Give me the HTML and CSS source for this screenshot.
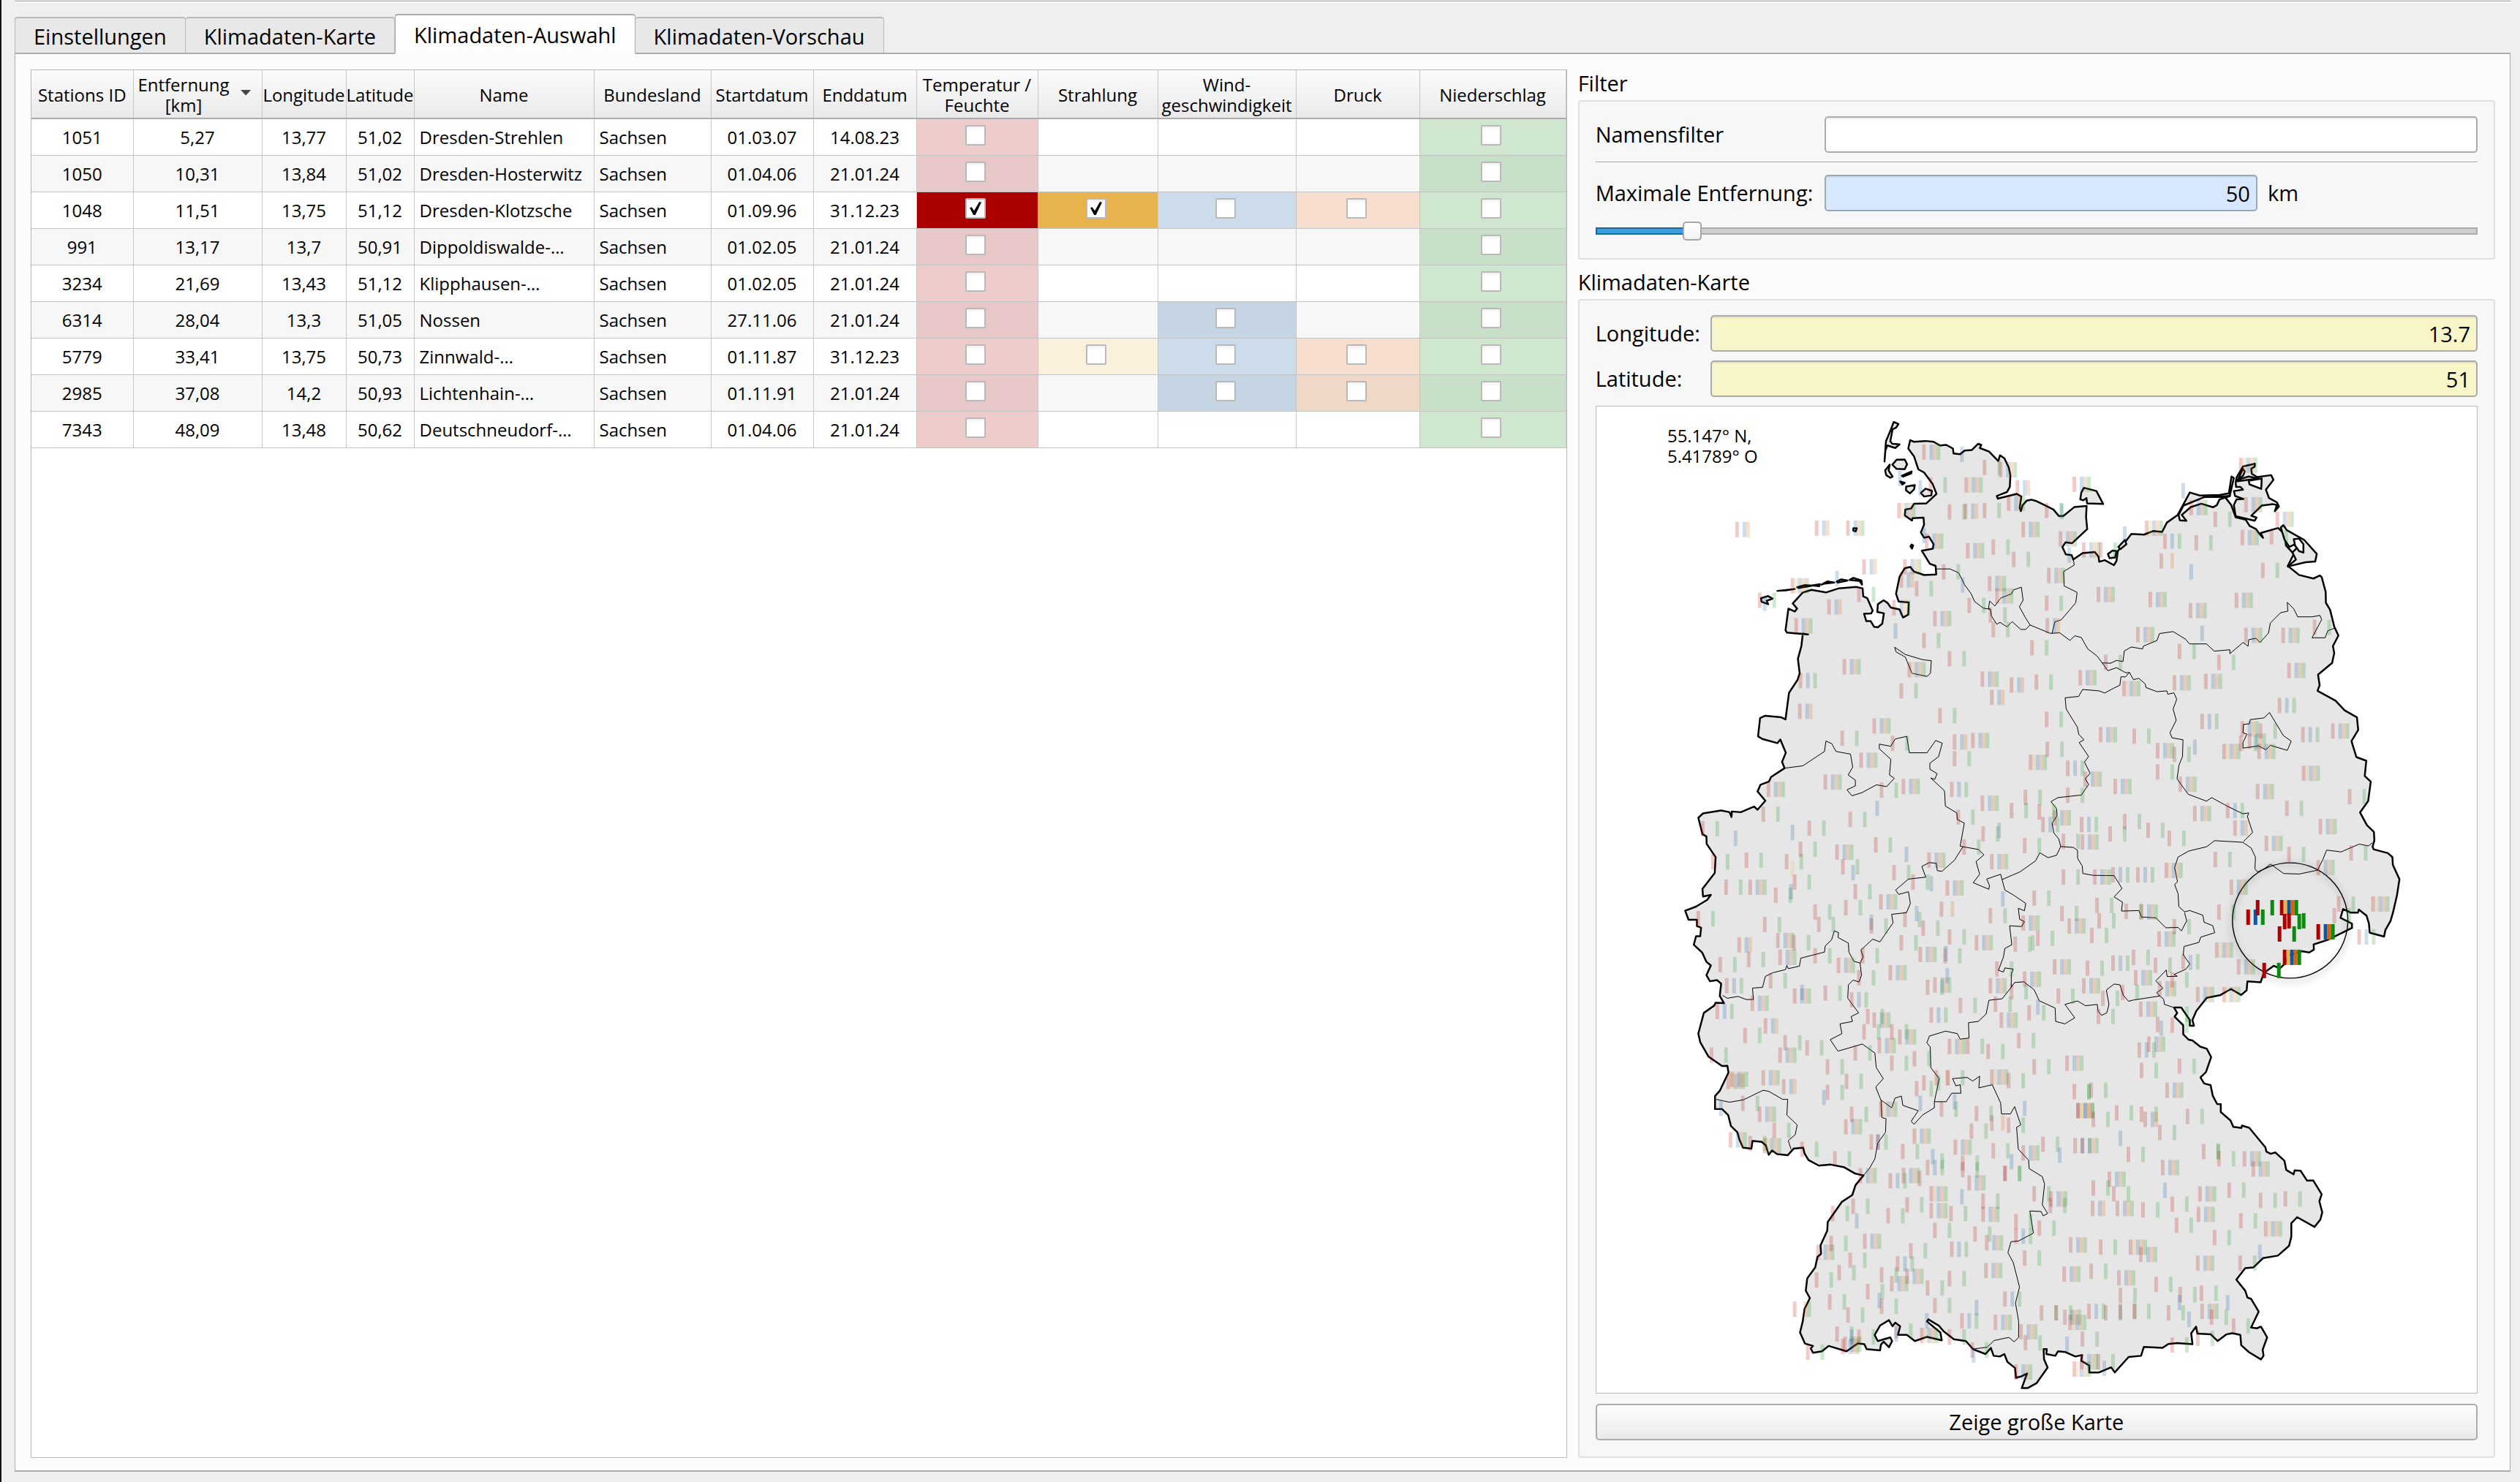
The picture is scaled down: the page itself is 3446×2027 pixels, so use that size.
FILE: index.html
```html
<!DOCTYPE html>
<html lang="de">
<head>
<meta charset="utf-8">
<title>Klimadaten-Auswahl</title>
<link rel="stylesheet" href="styles.css">
</head>
<body>
<div class="window">
  <nav class="tabs" role="tablist">
    <button class="tab" role="tab" type="button">Einstellungen</button>
    <button class="tab" role="tab" type="button">Klimadaten-Karte</button>
    <button class="tab tab-active" role="tab" type="button" aria-selected="true">Klimadaten-Auswahl</button>
    <button class="tab" role="tab" type="button">Klimadaten-Vorschau</button>
  </nav>
  <main class="panel">
    <section class="table-frame">
      <table class="stations">
        <colgroup>
          <col class="c-id"><col class="c-dist"><col class="c-lon"><col class="c-lat"><col class="c-name"><col class="c-land"><col class="c-start"><col class="c-end"><col class="c-temp"><col class="c-rad"><col class="c-wind"><col class="c-press"><col>
        </colgroup>
        <thead>
          <tr>
            <th>Stations ID</th>
            <th class="sorted"><span class="sort-head"><span>Entfernung<br>[km]</span><span class="sort-arrow"></span></span></th>
            <th>Longitude</th><th>Latitude</th><th>Name</th><th>Bundesland</th><th>Startdatum</th><th>Enddatum</th>
            <th>Temperatur /<br>Feuchte</th><th>Strahlung</th><th>Wind-<br>geschwindigkeit</th><th>Druck</th><th>Niederschlag</th>
          </tr>
        </thead>
        <tbody id="rows"></tbody>
      </table>
    </section>
    <aside class="side">
      <h2 class="group-title">Filter</h2>
      <section class="group">
        <div class="field">
          <label class="label-wide" for="name-filter">Namensfilter</label>
          <input class="text" id="name-filter" type="text">
        </div>
        <hr class="rule">
        <div class="field">
          <label class="label-wide" for="max-dist">Maximale Entfernung:</label>
          <div class="dist">
            <input class="text text-blue" id="max-dist" type="text" value="50">
            <span>km</span>
          </div>
        </div>
        <input class="slider" type="range" min="0" max="500" value="50" aria-label="Maximale Entfernung">
      </section>
      <h2 class="group-title group-title-next">Klimadaten-Karte</h2>
      <section class="group group-map">
        <div class="field">
          <label class="label-narrow" for="lon">Longitude:</label>
          <input class="text text-yellow" id="lon" type="text" value="13.7">
        </div>
        <div class="field">
          <label class="label-narrow" for="lat">Latitude:</label>
          <input class="text text-yellow" id="lat" type="text" value="51">
        </div>
        <div class="map">
          <svg class="map-svg" viewBox="2181 556 1206 1351" role="img" aria-label="Karte">
            <defs><filter id="soft" x="-20%" y="-20%" width="140%" height="140%"><feGaussianBlur stdDeviation="5"/></filter></defs>
            <g id="land"></g>
            <g id="borders"></g>
            <circle class="radius-shadow" cx="3131" cy="1263" r="80"/>
            <circle class="radius" cx="3131" cy="1260" r="79"/>
            <g id="marks"></g>
            <text class="coords"><tspan x="2278" y="605">55.147° N,</tspan><tspan x="2278" y="633">5.41789° O</tspan></text>
          </svg>
        </div>
        <button class="push" type="button">Zeige große Karte</button>
      </section>
    </aside>
  </main>
</div>
<script src="app.js"></script>
</body>
</html>
```
FILE: styles.css
```css
* { box-sizing: border-box; }
body {
  margin: 0;
  background: #efefef;
  color: #000;
  font-family: "Open Sans", "Noto Sans", sans-serif;
  font-size: 29px;
  line-height: 38px;
}
button, input { font: inherit; color: inherit; margin: 0; }
.window {
  min-height: 100vh;
  display: flex;
  flex-direction: column;
  border-left: 2px solid #111418;
  padding: 1px 13px 14px 18px;
}
.tabs {
  display: flex;
  align-items: flex-end;
  border-top: 1px solid #a0a0a0;
  box-shadow: inset 0 2px #fff;
  padding-top: 17px;
  margin-bottom: -2px;
}
.tab {
  height: 51px;
  padding: 2px 25px 0;
  border: 1px solid #b9b9b9;
  border-top-width: 2px;
  border-bottom: 2px solid #ababab;
  border-left-width: 0;
  border-radius: 4px 4px 0 0;
  background: #e8e8e8;
  white-space: nowrap;
}
.tab:first-child { border-left-width: 1px; }
.tab-active {
  height: 55px;
  background: linear-gradient(#fff, #fcfcfc);
  border-color: #ababab;
  border-left-width: 1px;
  border-bottom-color: #fcfcfc;
  z-index: 1;
}
.panel {
  flex: 1;
  display: grid;
  grid-template-columns: minmax(0, 2100fr) minmax(0, 1254fr);
  gap: 15px;
  padding: 21px 20px 17px 21px;
  border: 1px solid #ababab;
  border-top-width: 2px;
  border-bottom-width: 2px;
  background: #fcfcfc;
}
.table-frame { border: 1px solid #b9b9b9; background: #fff; overflow: hidden; }
.stations { width: 100%; table-layout: fixed; border-collapse: collapse; font-size: 24px; line-height: 28px; }
.c-id { width: 139px; } .c-dist { width: 176px; } .c-lon { width: 115px; } .c-lat { width: 93px; }
.c-name { width: 246px; } .c-land { width: 160px; } .c-start { width: 140px; } .c-end { width: 141px; }
.c-temp { width: 166px; } .c-rad { width: 164px; } .c-wind { width: 189px; } .c-press { width: 169px; }
.stations th {
  height: 66px;
  padding: 2px 0 0;
  font-weight: 400;
  white-space: nowrap;
  overflow: hidden;
  border-right: 1px solid #c6c6c6;
  border-bottom: 2px solid #ababab;
  background: linear-gradient(#fbfbfb, #f3f3f3 50%, #e9e9e9);
}
.sort-head { display: flex; align-items: center; justify-content: center; gap: 15px; padding-right: 8px; }
.sort-arrow { width: 15px; height: 8px; margin-bottom: 6px; background: #444; clip-path: polygon(0 0, 100% 0, 50% 100%); }
.stations td {
  height: 50px;
  padding: 2px 7px 0;
  text-align: center;
  white-space: nowrap;
  border-right: 1px solid #c6c6c6;
  border-bottom: 1px solid #c3c3c3;
}
.stations tr:nth-child(even) td { background: #f7f7f7; }
.stations .left { text-align: left; }
.stations .check { padding: 0 4px 4px 0; line-height: 0; }
.stations .temp { background: #eecccc; } .stations .rad { background: #fbf0dc; }
.stations .wind { background: #ccdcea; } .stations .press { background: #f7dece; }
.stations .rain { background: #cee7ce; }
.stations tr:nth-child(even) .temp { background: #e7c7c7; }
.stations tr:nth-child(even) .wind { background: #c6d5e4; }
.stations tr:nth-child(even) .press { background: #f0d8c8; }
.stations tr:nth-child(even) .rain { background: #c8e0c8; }
.stations .temp-on { background: #aa0000; }
.stations .rad-on { background: #e8b34c; }
.tick {
  appearance: none;
  display: inline-grid;
  place-items: center;
  width: 28px;
  height: 28px;
  border: 2px solid #b9b9b9;
  border-radius: 2px;
  background: linear-gradient(#f0f0f0, #fff 5px);
  vertical-align: middle;
}
.tick:checked::before {
  content: "";
  width: 16px;
  height: 18px;
  background: #000;
  clip-path: polygon(0 46%, 16% 40%, 38% 68%, 82% 0, 100% 4%, 48% 100%, 32% 100%);
}
.side { display: flex; flex-direction: column; }
.group-title { margin: 0 0 4px; height: 38px; font-size: 29px; font-weight: 400; }
.group-title-next { margin-top: 12px; }
.group { border: 2px solid #e0e0e0; border-radius: 4px; background: #f7f7f7; padding: 20px 22px 24px; }
.group-map { flex: 1; display: flex; flex-direction: column; gap: 12px; padding-bottom: 22px; }
.field { display: flex; align-items: center; }
.label-wide { flex: 0 0 313px; }
.label-narrow { flex: 0 0 157px; }
.text {
  flex: 1;
  min-width: 0;
  height: 50px;
  padding: 0 8px;
  border: 2px solid #ababab;
  border-radius: 5px;
  background: #fff;
  box-shadow: inset 0 2px rgba(0, 0, 0, 0.07);
}
.text-blue { flex: 0 0 592px; flex-basis: 66.3%; background: #d7e8fe; border-color: #9aa8b8; text-align: right; }
.text-yellow { background: #f8f5c8; text-align: right; }
.dist { flex: 1; display: flex; align-items: center; gap: 14px; }
.rule { margin: 12px 0 16px; height: 2px; border: 0; border-top: 1px solid #a0a0a0; background: #fff; }
.slider { appearance: none; display: block; width: 100%; height: 26px; margin: 14px 0 0; background: none; }
.slider::-webkit-slider-runnable-track {
  height: 10px;
  border: 2px solid #ababab;
  border-radius: 3px;
  background: linear-gradient(90deg, #3ba0e0 11%, #d0d0d0 11%);
  border-image: linear-gradient(90deg, #226693 11%, #ababab 11%) 2;
}
.slider::-webkit-slider-thumb {
  appearance: none;
  width: 26px;
  height: 26px;
  margin-top: -10px;
  border: 2px solid #a6a6a6;
  border-radius: 5px;
  background: linear-gradient(#fff, #f2f2f2);
}
.map { flex: 1 1 0; min-height: 600px; border: 1px solid #b9b9b9; background: #fff; display: flex; }
.map-svg { display: block; flex: 1; min-width: 0; width: 100%; height: 100%; }
.push {
  height: 50px;
  margin-top: 2px;
  border: 2px solid #ababab;
  border-radius: 5px;
  background: linear-gradient(#fff, #e9e9e9);
}
.coast { fill: #e6e6e6; stroke: #000; stroke-width: 2.5; stroke-linejoin: round; stroke-linecap: round; }
.lagoon { fill: #fff; }
.border { fill: none; stroke: #000; stroke-width: 1; stroke-linejoin: round; }
.radius { fill: none; stroke: #000; stroke-width: 1.4; }
.radius-shadow { fill: none; stroke: #000; stroke-width: 6; opacity: 0.12; filter: url(#soft); }
.faint { opacity: 0.2; }
.r { fill: #aa0000; } .y { fill: #e8b34c; } .b { fill: #0a57a2; } .o { fill: #de5f0c; } .g { fill: #0a8a0f; }
.coords { font-size: 24px; }
```
FILE: app.js
```js
// Station table ---------------------------------------------------------
// The last field names the available series; upper case means selected.
const stations = [
  ["1051", "5,27", "13,77", "51,02", "Dresden-Strehlen", "01.03.07", "14.08.23", "t...n"],
  ["1050", "10,31", "13,84", "51,02", "Dresden-Hosterwitz", "01.04.06", "21.01.24", "t...n"],
  ["1048", "11,51", "13,75", "51,12", "Dresden-Klotzsche", "01.09.96", "31.12.23", "TSwdn"],
  ["991", "13,17", "13,7", "50,91", "Dippoldiswalde-…", "01.02.05", "21.01.24", "t...n"],
  ["3234", "21,69", "13,43", "51,12", "Klipphausen-…", "01.02.05", "21.01.24", "t...n"],
  ["6314", "28,04", "13,3", "51,05", "Nossen", "27.11.06", "21.01.24", "t.w.n"],
  ["5779", "33,41", "13,75", "50,73", "Zinnwald-…", "01.11.87", "31.12.23", "tswdn"],
  ["2985", "37,08", "14,2", "50,93", "Lichtenhain-…", "01.11.91", "21.01.24", "t.wdn"],
  ["7343", "48,09", "13,48", "50,62", "Deutschneudorf-…", "01.04.06", "21.01.24", "t...n"]
];
const series = { t: ["temp", "Temperatur / Feuchte"], s: ["rad", "Strahlung"], w: ["wind", "Windgeschwindigkeit"], d: ["press", "Druck"], n: ["rain", "Niederschlag"] };
document.getElementById("rows").innerHTML = stations.map(s => {
  const checks = [...s[7]].map(c => {
    if (c === ".") return "<td></td>";
    const [cls, label] = series[c.toLowerCase()];
    const on = c !== c.toLowerCase();
    return `<td class="check ${cls}${on ? ` ${cls}-on` : ""}"><input class="tick" type="checkbox" aria-label="${label} ${s[0]}"${on ? " checked" : ""}></td>`;
  }).join("");
  return `<tr><td>${s[0]}</td><td>${s[1]}</td><td>${s[2]}</td><td>${s[3]}</td><td class="left">${s[4]}</td><td class="left">Sachsen</td><td>${s[5]}</td><td>${s[6]}</td>${checks}</tr>`;
}).join("");

// Map -------------------------------------------------------------------
// Geometry is stored per map sheet: origin and scale of each sheet.
const sheets = {
  A: [2260, 550, 0.3954, 0.3571],
  B: [2820, 580, 0.3571, 0.3827],
  C: [2260, 1080, 0.3827, 0.3333],
  D: [2840, 1100, 0.3571, 0.3571],
  E: [2300, 1500, 0.6122, 0.3361]
};
const place = (k, x, y) => {
  const s = sheets[k];
  return [s[0] + x * s[2], s[1] + y * s[3]].map(v => Math.round(v * 10) / 10);
};
// "A x,y x,y B x,y ..." becomes one polyline across sheets.
const trace = src => {
  let key = "A", cmd = "M", d = "";
  for (const t of src.trim().split(/\s+/)) {
    if (sheets[t]) { key = t; continue; }
    const [x, y] = t.split(",").map(Number);
    d += cmd + place(key, x, y).join(" ");
    cmd = "L";
  }
  return d;
};

const mainland = `A 887,146 900,152 940,149 968,152 990,166 1012,164 1035,178 1037,197 1060,200 1075,186 1100,184 1122,160 1133,164 1128,176 1160,190 1192,226 1198,204 1213,215 1228,250 1234,280 1232,325 1222,345 1187,360 1190,370 1256,352 1272,362 1266,405 1270,418 1276,396 1290,378 1306,374 1325,380 1383,412 1402,437 1418,436 1456,402 1498,398 1496,440 1500,487 1448,541 1425,538 1414,556 1426,584 1446,587 1452,604
B 39,485 75,462 122,458 136,475 139,493 160,487 195,505 205,490 210,455 240,420 262,393 310,396 345,383 380,386 398,353 440,325 486,245 525,256 600,254 636,248 646,188 655,193 640,255 622,262 645,290 662,334 700,342 716,365 740,376 755,395 767,407 758,390 825,372 850,395 855,435 885,465 862,508 905,540 960,553 985,542 992,548 1007,600 1008,640 1024,665 1040,725 1056,757 1035,795 1040,820 1032,855 978,897 984,935 976,955 1045,990 1080,1025 1127,1050 1132,1095 1106,1135 1125,1192 1163,1205 1157,1260 1180,1280 1170,1350 1139,1390 1165,1435 1192,1460 1194,1490
D 1131,165 1135,175 1190,190 1207,205 1209,235 1234,290 1225,350 1210,415 1200,450 1180,485 1175,510 1120,495 1117,460 1108,430 1078,406 1075,418 1048,418 1018,404 1008,438 1052,460 1052,477 960,522 905,540 906,560 888,571 860,566 815,580 800,595 797,612 775,632 752,622 720,645 712,655 702,685 651,682 648,716 627,734 588,711 548,734 495,745 455,795 440,830 446,852 430,852 430,830 397,782 370,782 382,803 372,817 405,850 405,885 425,905 440,908 470,932 495,940 512,972 492,1030 471,1050 485,1073 510,1080 518,1120 535,1152 549,1153 549,1183 586,1215 597,1240 628,1244 630,1235 658,1243 720,1318 724,1335 740,1343 758,1338 793,1370 800,1405 828,1422 832,1407 855,1408 880,1446 903,1445 936,1498 927,1525 938,1568
E 1425,505 1412,535 1373,495 1360,520 1360,575 1355,612 1330,652 1297,662 1275,700 1257,703 1237,750 1257,795 1262,823 1270,828 1287,880 1270,945 1283,948 1292,941 1306,985 1296,1035 1298,1060 1292,1075 1265,1045 1248,1017 1246,975 1228,968 1215,973 1195,1000 1180,973 1150,970 1147,941 1136,968 1139,1013 1105,1008 1085,1012 1072,1028 1030,1024 1024,1060 996,1065 965,1128 957,1107 930,1128 908,1128 908,1100 890,1080 892,1057 877,1063 855,1045 838,1042 832,1060 812,1053 813,1033 806,1033 807,1075 815,1108 790,1172 770,1192 757,1192 769,1132 755,1145 744,1150 742,1110 725,1085 718,1053 708,1063 694,1060 688,1028 676,1053 648,1033 632,1000 605,993 582,960 572,938 548,912 545,920 575,965 578,997 545,983 518,1000 500,975 480,975 485,940 474,925 468,940 460,915 440,937 428,975 435,1000 463,985 467,1000 460,1025 448,1003 442,1015 440,1038 410,1033 405,1013 390,1010 365,1042 325,1020 310,1042 290,1048 285,1030 290,1020 272,1010 261,965 267,920 271,870 283,825 274,795 277,745 295,700 300,657 308,645 307,610 322,550 323,515 355,432 378,405 385,365 403,325 385,318 360,292 330,281 303,285 280,262 271,235 268,212
C 499,1478 478,1505 440,1500 422,1485 410,1503 400,1465 385,1450 352,1446 348,1478 318,1474 305,1440 298,1410 275,1385 265,1340 243,1315 218,1315 218,1262 235,1240 266,1165 262,1137 243,1138 195,1100 165,1040 158,1005 178,920 215,890 220,878 250,880 235,850 240,800 225,785 200,790 187,765 203,725 187,710 172,672 142,640 150,605 165,605 168,570 153,563 153,537 123,537 111,500 150,483 190,455 203,435 175,442 173,410 217,345 220,280 188,225 187,195 173,185 158,118 175,100 240,88 270,95 277,115 278,92 310,95 358,72 370,85 398,48 370,10
A 358,1494 368,1468 398,1455 405,1438 452,1404 443,1380 456,1345 437,1294 427,1308 375,1292 360,1282 367,1212 385,1203 440,1209 455,1217 467,1115 497,1065 504,1040 498,985 510,935 515,888 533,891 460,884 455,875 465,792 487,803 495,792 480,772 515,730 545,720 595,730 640,714 700,709 722,714 724,745 738,752 757,800 752,810 727,812 735,840 750,840 762,862 775,864 790,850 796,810 773,805 775,775 795,760 808,770 820,788 850,795 862,826 880,815 882,768 847,765 838,735 850,670 868,637 887,632 900,650 935,663 977,661 975,628 955,620 927,570 965,562 968,545 952,516 935,520 924,500 935,470 933,443 895,445 893,454 868,435 870,412 890,408 900,390 943,388 978,352 965,315 935,270 915,258 900,208 880,178`;

const islands = [
  "B 80,228 128,240 154,286 92,284 90,265 78,273 66,270 70,245",
  "A 830,76 846,84 838,98 826,104 818,150 825,160 850,162 835,176 808,166 801,185 798,228 803,150 820,105",
  "A 840,221 868,220 876,238 868,257 840,256 825,240",
  "A 816,240 800,262 804,280 818,290 826,286 812,262",
  "A 858,282 892,266 890,274 862,286", "A 852,304 868,310 860,316",
  "A 873,324 903,318 900,335 886,350 872,338", "A 940,332 962,340 960,358 935,362 924,348",
  "A 690,484 702,484 698,496 690,493", "A 892,546 897,550 893,562 888,553",
  "A 370,752 395,744 410,754 390,762 395,775 372,766", "A 427,724 487,717 455,722",
  "A 495,710 520,702 548,704 500,713", "A 548,703 574,698 572,706",
  "A 580,700 600,688 624,692 590,696", "A 632,688 648,680 670,684 636,692", "A 677,682 690,674 718,684 720,700 712,686",
  "B 662,208 666,190 690,152 736,142 735,152 722,160 724,178 745,190 798,183 807,200 778,235 790,265 820,280 828,295 812,312 820,290 805,287 762,292 722,328 742,335 735,346 700,338 662,330 655,290 665,270 692,268 660,258 655,240 690,235 680,225 663,225",
  "B 668,205 690,160 697,170 690,185 668,200 712,188 750,195",
  "B 835,370 845,362 858,380 925,415 973,465 967,492 930,495 862,510 893,485 880,460 900,440 885,432 868,440 850,415",
  "B 172,465 190,453 205,455 200,478 178,480", "B 212,440 237,415 243,430 220,448"
];
const lagoons = [
  "B 712,203 762,195 760,232 715,216",
  "B 462,292 540,262 640,258 600,270 590,290 575,298 530,285 490,297 455,325 473,346 448,345 443,325",
  "B 885,412 905,410 922,430 922,460 905,455 890,435"
];
const borders = [
  "A 977,640 1025,640 1055,655 1075,700 1098,735 1110,765 1140,790 1165,795",
  "A 1165,795 1158,792 1162,763 1180,782 1200,752 1238,735 1245,720 1272,710 1278,760 1265,785 1285,825 1302,855 1287,872 1270,872 1240,842 1222,862 1198,845 1187,852 1168,820 1165,795",
  "A 1302,855 1372,887 1405,885 1440,914 B 45,758 70,764 95,805 130,830 150,855 172,883 205,872 240,890 255,890 270,915 290,910 315,930 318,943 360,958 398,955 402,967 425,962 436,985 422,1020 434,1060 410,1105 418,1123 460,1130 458,1190 445,1220 437,1270 480,1325 550,1350 570,1337 630,1368 690,1395 712,1392 707,1405 727,1462 692,1494",
  "A 1452,604 1455,625 1418,650 1420,705 1465,730 1460,770 1410,835 1388,843 1378,887",
  "B 150,855 182,856 205,846 230,850 235,812 262,798 305,805 308,795 360,775 370,750 422,743 470,770 485,787 550,787 580,813 640,808 640,822 690,782 710,795 712,772 740,767 755,782 788,748 795,712 835,675 862,670 860,638 885,662 900,690 955,690 985,685 992,700 955,765 1005,765 1015,740 1043,730",
  "B 255,888 240,905 222,905 218,935 195,945 160,963 138,955 75,950 60,975 8,980 12,1020 55,1085 60,1110 80,1130 62,1140 98,1190 82,1210 104,1250 85,1270 98,1290 70,1328 C 1445,35 1420,52 1440,80 1442,110 1424,140 1430,180 1448,205 1455,236 1500,240 1515,252 D 0,210 18,240 20,268 60,275 140,276 170,325 140,358 172,378 168,412 235,410 245,435 300,438 338,476 385,475 398,488 418,450 410,418",
  "D 410,415 388,395 385,345 372,310 383,300 372,245 385,205 425,182 495,165 525,142 633,148 665,170 682,205 680,250 690,262 715,250 740,232 790,268 850,270 920,255 940,215 955,178 1010,185 1080,155 1115,162 1130,150",
  "D 410,415 430,410 480,428 485,455 518,468 526,495 472,512 465,532 408,548 405,580 430,615 415,635 370,655 382,662 343,663 340,638 300,680 327,708 303,725 315,738 330,750 333,770 370,782",
  "D 315,738 215,753 195,758 175,735 162,695 140,692 110,715 120,770 112,802 92,812 78,795 75,770 30,775 0,757 C 1515,871 1470,885 1505,940 1470,965 1437,955 1435,900 1378,870 1360,825 1323,792 1290,795 1278,815 1245,862 1198,868 1188,925 1160,955 1125,960 1127,1023 1095,1028 1085,1005 1043,995 985,1015 976,1043 988,1060 990,1145 1020,1190 1003,1285 1045,1285 1065,1250 1098,1250 1095,1215 1080,1220 1068,1190 1120,1185 1140,1200 1165,1180 1162,1228 1210,1215 1240,1290 1243,1335 1275,1335 1290,1305 1312,1380 1297,1390 1303,1480 1340,1525 1342,1560 E 803,330 808,360 803,445 815,480 805,490 800,472 775,470 783,560 750,592 733,595 726,640 738,680 752,780 743,845 750,920 750,985 740,1003 728,985 695,998 680,1025 650,1032",
  "C 1278,815 1278,760 1285,740 1255,735 1250,752 1232,745 1250,690 1255,655 1280,640 1272,562 1315,565 1325,545 1308,535 1303,490 1325,500 1330,470 1285,435 1255,415 1245,372 1240,350 1190,370 1200,395 1198,412 1142,385 1165,350 1152,298 1180,270 1160,248 1105,237",
  "C 1245,372 1310,340 1365,295 1380,262 1410,282 1440,272 1455,236",
  "A 452,1404 515,1395 590,1340 595,1300 615,1310 630,1340 680,1350 688,1400 672,1430 697,1450 697,1472 668,1487 685,1510 720,1498 770,1468 805,1475 832,1443 815,1430 820,1370 780,1330 780,1312 820,1320 835,1292 875,1282 884,1345 945,1345 975,1298 998,1308 985,1360 955,1385 955,1408 980,1425 972,1447 958,1442 1005,1490 C 1040,20 1042,70 1083,98 1085,125 1110,140 1095,235 1105,237 1075,292 1030,338 1013,335 1010,305 985,302 958,318 972,362 910,370 864,415 875,433 910,422 917,470 903,508 850,515 855,550 808,628 782,617 740,662 748,690 737,715 715,708 697,670 695,633 658,610 660,590 645,583 635,620 612,645 610,670 525,695 520,728 480,738 475,725 470,742 425,755 398,770 388,815 352,818 355,865 330,865 300,852 262,860 245,848",
  "C 737,715 742,765 733,793 712,785 695,805 693,860 732,920 705,935 710,955 665,965 672,1005 630,1030 658,1077 745,1048 790,1085 795,1145 820,1190 793,1225 812,1280 815,1350 830,1355 828,1410 800,1455 790,1520 770,1560 E 403,325",
  "C 812,1278 850,1310 862,1270 885,1262 890,1300 945,1322 920,1365 930,1378 960,1340 1003,1310 1003,1285",
  "C 222,1275 270,1287 320,1277 390,1238 410,1242 460,1275 478,1275 475,1340 512,1380 505,1420 480,1445 490,1480",
  "A 833,940 870,968 930,988 960,992 957,1040 945,1052 893,1040 870,978 838,958 833,940",
  "B 718,1058 770,1052 792,1033 845,1115 875,1135 860,1168 795,1150 778,1166 750,1152 690,1160 690,1140 705,1110 690,1105 692,1075 715,1073 718,1058"
];

// Station marks: kind followed by positions. A dot leaves a slot empty.
const kinds = { F: "rybog", S: "r.bog", T: "r...g", V: "r.bo", U: "r.b.g", O: "r..o", W: "b", R: "r", G: "g", Y: "y", P: "o" };
const marks = {
  A: `F 1075,287 842,385 473,676 1181,714 878,997 1297,1353
S 928,162 1193,230 1222,358 665,454 1272,459 938,504 1401,496 1080,541 862,602 1156,666 1361,636 824,760 966,801 486,829 652,986 1130,1033 756,1212 1098,1269 711,1345 587,1428 858,1445 389,1456
T 1138,221 951,287 1017,392 1138,385 1353,385 1168,526 1239,574 996,622 359,731 703,709 903,686 1085,750 1353,742 1158,787 928,885 1168,844 1302,913 1017,955 850,1078 1318,1043 645,1260 984,1173 1353,1187 820,1281 1356,1303 1034,1338 781,1459 1426,1478
V 1252,300 1071,389 281,459 556,454 721,602 850,652 599,756 1356,829 1232,1056 1163,1103 498,1155 1034,1274
U 501,1039 1426,1376 1024,1456
W 1060,171 845,264 916,300 1406,389 928,482 1431,556 627,647 377,741 1062,672 830,848`,
  B: `F 675,120 314,345 227,920 610,1145 916,1223
S 36,188 484,272 694,262 815,314 680,379 73,423 129,583 328,601 482,640 658,604 280,727 694,729 837,729 860,855 59,881 420,899 540,894 680,1064 708,1108 745,1145 137,1085 1028,1071 356,1142 78,1244 193,1270 442,1262 739,1288
T 577,314 792,375 504,397 137,423 759,497 958,700 440,787 591,826 157,826 750,1072 675,1116 266,1090 420,1155 356,1218 1092,1307 851,1348
U 384,392 823,980 526,1037 913,1085 624,1355
O 370,463
W 454,212 230,366 484,502 526,721 498,1129`,
  C: `F 259,1170 272,1161 1202,1152 805,1284 1510,1290 389,1434
S 648,228 337,372 805,432 1168,27 977,261 1427,87 1202,267 1043,375 1314,519 1479,532 436,591 444,660 653,693 946,648 1147,600 497,819 839,723 998,774 1197,777 1320,750 1427,699 345,849 782,918 1236,918 444,1062 800,1023 873,987 1051,1026 1471,1095 384,1155 371,1305 267,1410 679,1356 925,1395 1071,1440 1314,1464
T 384,72 695,93 549,129 167,132 517,216 787,198 669,288 204,267 324,261 468,267 497,351 251,372 429,405 852,312 713,390 679,456 1082,84 1171,153 1273,57 1322,3 1372,63 1103,207 920,351 1320,201 1458,183 1197,489 1354,417 1458,330 1453,480 570,474 583,525 389,525 152,501 771,531 891,505 956,540 494,600 570,654 332,669 230,690 740,654 878,600 1051,576 1035,654 1286,606 1367,582 410,756 606,807 727,744 972,783 1220,708 1273,800 757,903 1090,858 1335,888 1440,819 1215,852 319,981 463,1011 541,1032 199,1062 745,966 844,966 925,1077 713,1053 844,1095 1115,1026 1189,1047 1299,1002 1354,1110 614,1110 682,1170 614,1215 959,1176 1045,1155 1262,1167 933,1200 1497,1212 311,1260 423,1371 337,1425 700,1305 1022,1284 1147,1302 1262,1350 1129,1374 1207,1455 1385,1428 771,1419 883,1458 523,1449 640,1488 972,1524 1098,1506 1250,1548
U 1385,114 253,777 220,882 700,834 985,897 1501,1434
V 298,609 392,942 457,1191
O 1022,462 1004,1155 1201,1341
R 795,1419
G 1349,600 1024,1496
Y 489,297
W 792,48 489,147 285,171 896,237 706,312 483,390 1228,138 985,357 1241,420 771,516 933,480 1037,645 523,804 1043,735 1367,864 601,1236 233,1281 946,1260 1069,1254 1320,1282 1445,1473 795,1419 990,1479 998,1524 1273,1500`,
  D: `F 333,228 1126,356 526,532 554,703 -5,1148
S 442,8 11,118 717,124 924,59 916,216 59,252 582,291 238,386 305,490 610,596 216,638 17,669 308,680 235,759 454,703 266,893 336,1070 11,1282 633,1333 666,1372 319,1366 115,1411 462,1467 146,1523 456,1546
T 174,39 118,87 263,73 344,104 804,165 1042,160 521,185 67,361 179,384 535,386 994,356 977,400 76,420 364,442 48,476 207,560 31,602 291,591 398,577 356,647 165,694 90,717 73,787 356,820 238,994 384,977 45,1070 53,1182 143,1157 238,1162 414,1170 308,1232 188,1316 476,1305 535,1333 53,1445 132,1467 574,1453 694,1492 790,1487 356,1506 244,1529
V 596,64 252,1182 50,1523
U 8,50 129,244 224,244 129,583 230,916 1072,482
R 300,818
G 412,778 36,1075 532,1305
W 426,579 314,832 157,1254 328,1453`,
  E: `F 550,369 529,945 860,892 996,586 1298,512 871,1083
S 392,295 489,295 550,437 636,324 666,452 818,390 675,568 402,562 298,607 497,705 462,735 673,681 694,893 353,991 357,982 752,931 740,1095 847,696 863,577 849,872 1020,616 970,711 1157,848 1147,652 887,1052
T 497,414 376,420 330,449 454,458 595,449 559,518 621,271 715,286 666,399 781,369 817,415 740,482 792,509 648,533 327,571 369,640 345,690 294,720 505,601 439,699 542,753 591,714 759,631 408,768 439,827 323,809 364,863 245,839 559,824 472,927 340,940 389,952 274,1015 591,952 642,1006 761,976 797,854 889,961 830,854 1099,497 930,586 908,684 1054,738 973,783 941,854 973,848 1004,848 1081,854 1107,780 1155,774 1178,871 1226,907 1241,652 1184,547 1243,479 925,1053 1089,985 1147,957
U 459,315 740,542 596,596 475,655 715,797 619,887 903,848
R 524,306
P 269,839
W 384,479 619,381 435,803 652,833 372,951 541,887 472,940 645,1025 854,982 1106,812 1214,812 1127,881 1286,607 938,1080`
};
const active = { D: `F 776,370 787,560
S 916,462
U 647,406
T 683,370 787,424 804,420 767,470 708,610` };

const drawMarks = (set, cls) => Object.entries(set).map(([key, text]) =>
  text.split("\n").map(line => {
    const [kind, ...pts] = line.split(" ");
    return pts.map(p => {
      const [x, y] = place(key, ...p.split(",").map(Number)).map(Math.round);
      return [...kinds[kind]].map((c, i) => c === "." ? "" : `<rect class="${c} ${cls}" x="${x + 5 * i}" y="${y}" width="5" height="21"/>`).join("");
    }).join("");
  }).join("")).join("");

const shape = (src, cls) => `<path class="${cls}" d="${trace(src)}${cls === "border" ? "" : "Z"}"/>`;
document.getElementById("land").innerHTML =
  shape(mainland, "coast") + islands.map(s => shape(s, "coast")).join("") + lagoons.map(s => shape(s, "coast lagoon")).join("");
document.getElementById("borders").innerHTML = borders.map(s => shape(s, "border")).join("");
document.getElementById("marks").innerHTML = drawMarks(marks, "faint") + drawMarks(active, "solid");
```
